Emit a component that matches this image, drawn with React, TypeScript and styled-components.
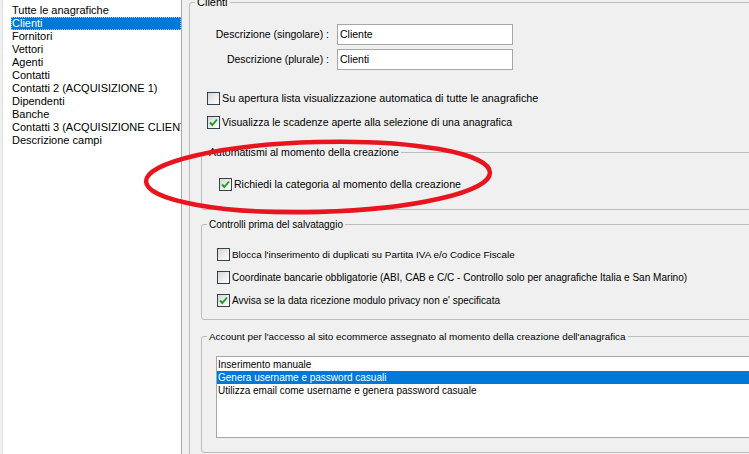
import React from "react";
import styled, { createGlobalStyle } from "styled-components";

const Global = createGlobalStyle`
  html, body { margin: 0; padding: 0; background: #f0f0f0; overflow: hidden; }
  body { font-family: "Liberation Sans", Arial, sans-serif; font-size: 11px; color: #000; }
  #root { width: 749px; height: 454px; overflow: hidden; }
  * { box-sizing: border-box; }
`;

const Page = styled.div`
  position: relative;
  display: flex;
  align-items: flex-start;
  width: 749px;
  height: 454px;
  overflow: hidden;
`;

const SideList = styled.ul`
  list-style: none;
  margin: -1px 0 0 2px;
  padding: 4px 0 0 8px;
  width: 180px;
  height: 480px;
  flex: none;
  background: #fff;
  border: 1px solid #a9a9a9;
  border-left-color: #e2e2e2;
`;

const SideItem = styled.li<{ $selected?: boolean }>`
  height: 13px;
  line-height: 13px;
  padding-left: 1px;
  white-space: nowrap;
  overflow: hidden;
  color: ${(p) => (p.$selected ? "#fff" : "#000")};
  background: ${(p) => (p.$selected ? "#0078d7" : "transparent")};
  outline: ${(p) => (p.$selected ? "1px dotted #f5b041" : "none")};
  outline-offset: -1px;
`;

const Group = styled.fieldset<{ $width: number; $ml?: number; $mt?: number }>`
  margin: ${(p) => p.$mt ?? 0}px 0 0 ${(p) => p.$ml ?? 0}px;
  padding: 0;
  min-width: 0;
  width: ${(p) => p.$width}px;
  flex: none;
  border: 1px solid #bcbcbc;
  border-radius: 3px;
`;

const Legend = styled.legend<{ $size?: number }>`
  margin-left: 5px;
  padding: 0 2px;
  height: 13px;
  line-height: 13px;
  font-size: ${(p) => p.$size ?? 11}px;
  white-space: nowrap;
`;

const GroupBody = styled.div<{ $pt: number; $pb: number; $pl: number }>`
  display: flex;
  flex-direction: column;
  padding: ${(p) => p.$pt}px 0 ${(p) => p.$pb}px ${(p) => p.$pl}px;
`;

const MainGroup = styled(Group)`
  margin-top: -4px;
`;

const FormGrid = styled.div`
  display: grid;
  grid-template-columns: 139px 176px;
  column-gap: 8px;
  row-gap: 4px;
  align-items: center;
  font-size: 10.5px;
`;

const Label = styled.label`
  text-align: right;
  white-space: nowrap;
  line-height: 13px;
`;

const TextInput = styled.div`
  height: 21px;
  background: #fff;
  border: 1px solid #a6a6a6;
  padding: 0 2px;
  line-height: 19px;
  white-space: nowrap;
`;

const CheckList = styled.div<{ $gap: number; $mt?: number; $ml?: number }>`
  display: flex;
  flex-direction: column;
  gap: ${(p) => p.$gap}px;
  margin-top: ${(p) => p.$mt ?? 0}px;
  margin-left: ${(p) => p.$ml ?? 0}px;
`;

const CheckRow = styled.div<{ $size: number }>`
  display: flex;
  align-items: center;
  gap: 2px;
  height: 13px;
  line-height: 13px;
  font-size: ${(p) => p.$size}px;
  white-space: nowrap;
`;

const Box = styled.span`
  width: 13px;
  height: 13px;
  flex: none;
  border: 1px solid #34414f;
  background: linear-gradient(135deg, #d6d6d6 0%, #eeeeee 55%, #ffffff 100%);
  display: inline-flex;
  align-items: center;
  justify-content: center;
`;

const ListBox = styled.ul`
  list-style: none;
  margin: 0;
  padding: 1px 0 0 0;
  width: 535px;
  height: 82px;
  background: #fff;
  border: 1px solid #a6a6a6;
  font-size: 10px;
`;

const ListItem = styled.li<{ $selected?: boolean }>`
  height: 13px;
  line-height: 13px;
  padding-left: 1px;
  white-space: nowrap;
  color: ${(p) => (p.$selected ? "#fff" : "#000")};
  background: ${(p) => (p.$selected ? "#0078d7" : "transparent")};
`;

const Annotation = styled.svg`
  position: absolute;
  left: 0;
  top: 0;
  width: 749px;
  height: 454px;
  pointer-events: none;
`;

const Check: React.FC<{ checked?: boolean; label: string; size?: number }> = ({
  checked,
  label,
  size = 10.6,
}) => (
  <CheckRow $size={size}>
    <Box>
      {checked && (
        <svg width="11" height="11" viewBox="0 0 11 11">
          <path d="M2 5.5 L4.3 8 L9 2.5" fill="none" stroke="#1e9e22" strokeWidth="1.9" />
        </svg>
      )}
    </Box>
    <span>{label}</span>
  </CheckRow>
);

const sideItems = [
  "Tutte le anagrafiche",
  "Clienti",
  "Fornitori",
  "Vettori",
  "Agenti",
  "Contatti",
  "Contatti 2 (ACQUISIZIONE 1)",
  "Dipendenti",
  "Banche",
  "Contatti 3 (ACQUISIZIONE CLIENTI)",
  "Descrizione campi",
];

export default function App() {
  return (
    <Page>
      <Global />
      <SideList>
        {sideItems.map((t, i) => (
          <SideItem key={t} $selected={i === 1}>
            {t}
          </SideItem>
        ))}
      </SideList>

      <MainGroup $width={600} $ml={7}>
        <Legend>Clienti</Legend>
        <GroupBody $pt={15} $pb={20} $pl={0}>
          <FormGrid>
            <Label>Descrizione (singolare) :</Label>
            <TextInput>Cliente</TextInput>
            <Label>Descrizione (plurale) :</Label>
            <TextInput>Clienti</TextInput>
          </FormGrid>

          <CheckList $gap={11} $mt={22} $ml={17}>
            <Check size={10.8} label="Su apertura lista visualizzazione automatica di tutte le anagrafiche" />
            <Check checked size={10.55} label="Visualizza le scadenze aperte alla selezione di una anagrafica" />
          </CheckList>

          <Group $width={570} $ml={11} $mt={17}>
            <Legend $size={10.55}>Automatismi al momento della creazione</Legend>
            <GroupBody $pt={19} $pb={18} $pl={17}>
              <Check checked size={10.55} label="Richiedi la categoria al momento della creazione" />
            </GroupBody>
          </Group>

          <Group $width={570} $ml={11} $mt={8}>
            <Legend $size={10}>Controlli prima del salvataggio</Legend>
            <GroupBody $pt={17} $pb={12} $pl={15}>
              <CheckList $gap={10}>
                <Check size={9.9} label="Blocca l'inserimento di duplicati su Partita IVA e/o Codice Fiscale" />
                <Check size={10.05} label="Coordinate bancarie obbligatorie (ABI, CAB e C/C - Controllo solo per anagrafiche Italia e San Marino)" />
                <Check checked size={10} label="Avvisa se la data ricezione modulo privacy non e' specificata" />
              </CheckList>
            </GroupBody>
          </Group>

          <Group $width={570} $ml={11} $mt={10}>
            <Legend $size={9.9}>
              Account per l'accesso al sito ecommerce assegnato al momento della creazione dell'anagrafica
            </Legend>
            <GroupBody $pt={13} $pb={14} $pl={14}>
              <ListBox>
                <ListItem>Inserimento manuale</ListItem>
                <ListItem $selected>Genera username e password casuali</ListItem>
                <ListItem>Utilizza email come username e genera password casuale</ListItem>
              </ListBox>
            </GroupBody>
          </Group>
        </GroupBody>
      </MainGroup>

      <Annotation viewBox="0 0 749 454">
        <ellipse
          cx="318"
          cy="177"
          rx="172"
          ry="35"
          fill="none"
          stroke="#e8141e"
          strokeWidth="4.5"
          transform="rotate(-1.5 318 177)"
        />
      </Annotation>
    </Page>
  );
}
